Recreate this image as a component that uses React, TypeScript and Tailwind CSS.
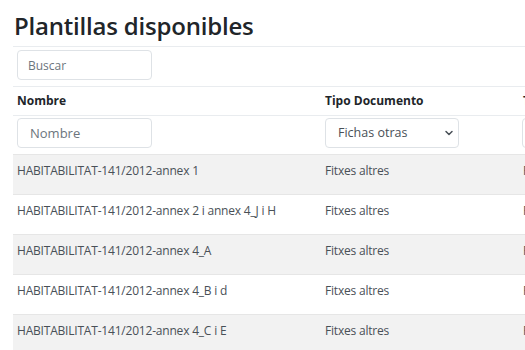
import { ChevronDown } from 'lucide-react'

const rows = [
  'HABITABILITAT-141/2012-annex 1',
  'HABITABILITAT-141/2012-annex 2 i annex 4_J i H',
  'HABITABILITAT-141/2012-annex 4_A',
  'HABITABILITAT-141/2012-annex 4_B i d',
  'HABITABILITAT-141/2012-annex 4_C i E',
]

export default function App() {
  return (
    <div className="w-[525px] h-[350px] overflow-hidden bg-white text-[#212529] font-['Open_Sans',sans-serif]">
      <div className="pl-[13px] w-[760px]">
        <h2 className="pt-[10px] pl-[1px] h-[46px] text-[24px] font-semibold tracking-[-0.2px] leading-[32px]">Plantillas disponibles</h2>
        <table className="w-[760px] table-fixed border-collapse text-[12px]">
          <colgroup>
            <col className="w-[308px]" />
            <col className="w-[198px]" />
            <col className="w-[254px]" />
          </colgroup>
          <tbody>
            <tr className="h-[40px] border-t border-[#e9ecef]">
              <td colSpan={3} className="px-[4px] pt-[3px] align-top">
                <input
                  placeholder="Buscar"
                  className="w-[135px] h-[30px] rounded-[4px] border border-[#dee2e6] px-[10px] text-[12px] placeholder:text-[#6c757d] outline-none"
                />
              </td>
            </tr>
            <tr className="h-[29px] border-t border-[#e9ecef] font-bold text-[#212529]">
              <td className="px-[4px] align-middle">Nombre</td>
              <td className="px-[4px] align-middle">Tipo Documento</td>
              <td className="px-[4px] align-middle">Tipo</td>
            </tr>
            <tr className="h-[39px] border-t border-[#e9ecef]">
              <td className="px-[4px] pt-[2px] align-top">
                <input
                  placeholder="Nombre"
                  className="w-[135px] h-[30px] rounded-[4px] border border-[#dee2e6] px-[12px] text-[13px] placeholder:text-[#6c757d] outline-none"
                />
              </td>
              <td className="px-[4px] pt-[2px] align-top">
                <div className="w-[134px] h-[30px] rounded-[4px] border border-[#dee2e6] pl-[12px] pr-[3px] flex items-center justify-between text-[#495057] text-[12.5px]">
                  <span>Fichas otras</span>
                  <ChevronDown size={12} strokeWidth={3} className="text-[#495057]" />
                </div>
              </td>
              <td className="px-[3px] pt-[2px] align-top">
                <div className="w-[134px] h-[30px] rounded-[4px] border border-[#dee2e6]" />
              </td>
            </tr>
            {rows.map((name, i) => (
              <tr
                key={name}
                className={`h-[40px] border-t border-[#e6e6e6] text-[#495057] tracking-[-0.2px] ${i % 2 === 0 ? 'bg-[#f2f2f2]' : 'bg-white'}`}
              >
                <td className="px-[4px] pt-[7px] align-top whitespace-nowrap">{name}</td>
                <td className="px-[4px] pt-[7px] align-top">Fitxes altres</td>
                <td className="px-[4px] pt-[7px] align-top">Plantilla</td>
              </tr>
            ))}
          </tbody>
        </table>
      </div>
    </div>
  )
}
